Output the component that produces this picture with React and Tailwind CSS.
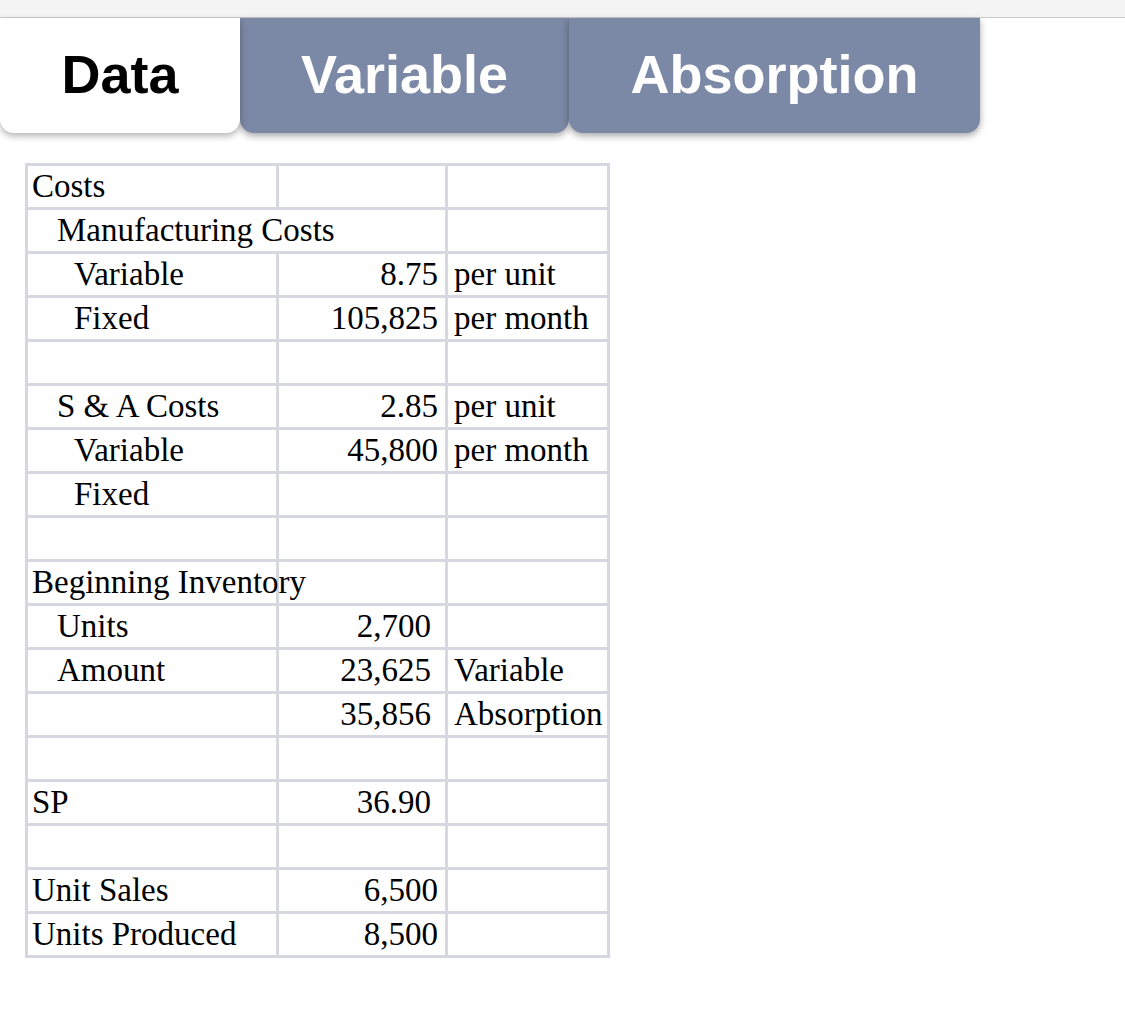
const rows = [
  { label: "Costs", indent: 0 },
  { label: "Manufacturing Costs", indent: 1, span: true },
  { label: "Variable", indent: 2, num: "8.75", note: "per unit" },
  { label: "Fixed", indent: 2, num: "105,825", note: "per month" },
  {},
  { label: "S & A Costs", indent: 1, num: "2.85", note: "per unit" },
  { label: "Variable", indent: 2, num: "45,800", note: "per month" },
  { label: "Fixed", indent: 2 },
  {},
  { label: "Beginning Inventory", indent: 0 },
  { label: "Units", indent: 1, num: "2,700", wide: true },
  { label: "Amount", indent: 1, num: "23,625", wide: true, note: "Variable" },
  { num: "35,856", wide: true, note: "Absorption" },
  {},
  { label: "SP", indent: 0, num: "36.90", wide: true },
  {},
  { label: "Unit Sales", indent: 0, num: "6,500" },
  { label: "Units Produced", indent: 0, num: "8,500" },
];

const indentClass = ["pl-[4px]", "pl-[29px]", "pl-[46px]"];

function Tab({ label, active, className = "" }) {
  return (
    <div
      className={`flex h-[115px] shrink-0 items-center justify-center rounded-b-[14px] pb-[2px] text-[54px] font-bold ${
        active
          ? "z-30 bg-white text-black shadow-[0_3px_7px_rgba(0,0,0,0.3)]"
          : "bg-[#7b88a6] text-white shadow-[0_3px_7px_rgba(0,0,0,0.35)]"
      } ${className}`}
      style={{ fontFamily: '"Liberation Sans", Arial, sans-serif' }}
    >
      {label}
    </div>
  );
}

export default function App() {
  return (
    <div className="min-h-[1011px] w-[1125px] bg-white">
      <div className="h-[18px] border-b border-[#cdcdcd] bg-[#f4f4f4]" />

      <div className="flex">
        <Tab label="Data" active className="w-[240px]" />
        <Tab label="Variable" className="z-10 w-[329px]" />
        <Tab label="Absorption" className="z-20 w-[411px]" />
      </div>

      <div className="ml-[25px] mt-[30px]">
        <table
          className="table-fixed border-collapse text-[33px] text-black"
          style={{ fontFamily: '"Liberation Serif", "Times New Roman", serif', width: 582 }}
        >
          <colgroup>
            <col style={{ width: 251 }} />
            <col style={{ width: 169 }} />
            <col style={{ width: 162 }} />
          </colgroup>
          <tbody>
            {rows.map((r, i) => (
              <tr key={i} className="h-[44px]">
                <td
                  colSpan={r.span ? 2 : 1}
                  className={`whitespace-nowrap border-[3px] border-[#d7d7e0] p-0 pb-[2px] leading-[38px] ${
                    indentClass[r.indent ?? 0]
                  }`}
                >
                  <span className="relative z-10">{r.label}</span>
                </td>
                {!r.span && (
                  <td
                    className={`whitespace-nowrap border-[3px] border-[#d7d7e0] p-0 pb-[2px] text-right leading-[38px] ${
                      r.wide ? "pr-[14px]" : "pr-[7px]"
                    }`}
                  >
                    {r.num}
                  </td>
                )}
                <td className="whitespace-nowrap border-[3px] border-[#d7d7e0] p-0 pb-[2px] pl-[6px] leading-[38px]">
                  {r.note}
                </td>
              </tr>
            ))}
          </tbody>
        </table>
      </div>
    </div>
  );
}
